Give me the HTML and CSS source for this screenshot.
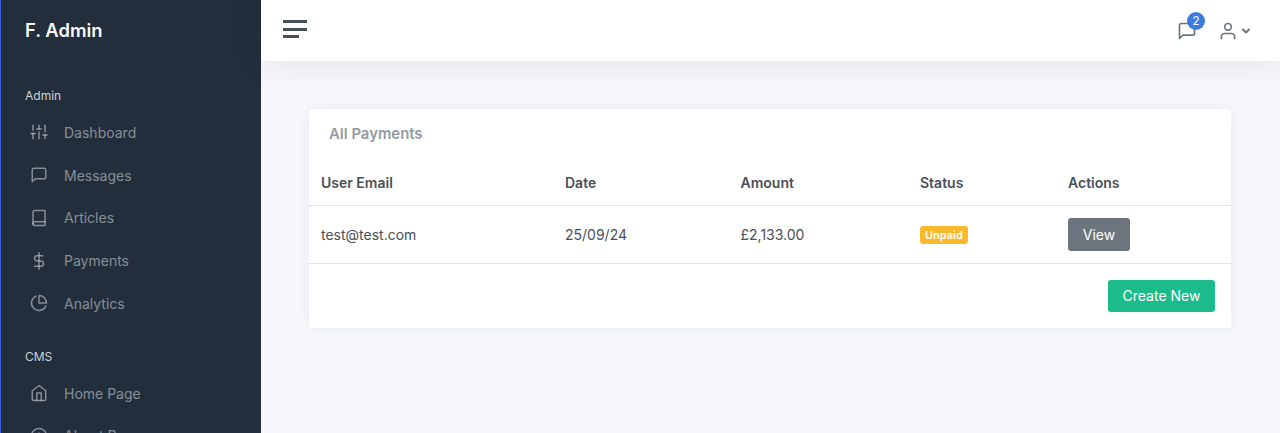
FILE: index.html
```html
<!DOCTYPE html>
<html lang="en">
<head>
    <meta charset="UTF-8">
    <meta name="viewport" content="width=device-width, initial-scale=1.0">
    <title>F. Admin - Payments</title>
    <link rel="stylesheet" href="styles.css">
</head>
<body>
    <div class="wrapper">
        <nav class="sidebar">
            <a class="brand" href="#">F. Admin</a>
            <div class="nav-header nav-header-first">Admin</div>
            <a class="nav-link" href="#">
                <svg class="nav-icon" viewBox="0 0 24 24"><line x1="4" y1="21" x2="4" y2="14"/><line x1="4" y1="10" x2="4" y2="3"/><line x1="12" y1="21" x2="12" y2="12"/><line x1="12" y1="8" x2="12" y2="3"/><line x1="20" y1="21" x2="20" y2="16"/><line x1="20" y1="12" x2="20" y2="3"/><line x1="1" y1="14" x2="7" y2="14"/><line x1="9" y1="8" x2="15" y2="8"/><line x1="17" y1="16" x2="23" y2="16"/></svg>
                Dashboard
            </a>
            <a class="nav-link" href="#">
                <svg class="nav-icon" viewBox="0 0 24 24"><path d="M21 15a2 2 0 0 1-2 2H7l-4 4V5a2 2 0 0 1 2-2h14a2 2 0 0 1 2 2z"/></svg>
                Messages
            </a>
            <a class="nav-link" href="#">
                <svg class="nav-icon" viewBox="0 0 24 24"><path d="M4 19.5A2.5 2.5 0 0 1 6.500 17H20"/><path d="M6.500 2H20v20H6.500A2.500 2.500 0 0 1 4 19.500v-15A2.500 2.500 0 0 1 6.500 2z"/></svg>
                Articles
            </a>
            <a class="nav-link" href="#">
                <svg class="nav-icon" viewBox="0 0 24 24"><line x1="12" y1="1" x2="12" y2="23"/><path d="M17 5H9.500a3.500 3.500 0 0 0 0 7h5a3.500 3.500 0 0 1 0 7H6"/></svg>
                Payments
            </a>
            <a class="nav-link" href="#">
                <svg class="nav-icon" viewBox="0 0 24 24"><path d="M21.210 15.890A10 10 0 1 1 8 2.830"/><path d="M22 12A10 10 0 0 0 12 2v10z"/></svg>
                Analytics
            </a>
            <div class="nav-header">CMS</div>
            <a class="nav-link" href="#">
                <svg class="nav-icon" viewBox="0 0 24 24"><path d="M3 9l9-7 9 7v11a2 2 0 0 1-2 2H5a2 2 0 0 1-2-2z"/><polyline points="9 22 9 12 15 12 15 22"/></svg>
                Home Page
            </a>
            <a class="nav-link" href="#">
                <svg class="nav-icon" viewBox="0 0 24 24"><circle cx="12" cy="12" r="10"/><line x1="12" y1="16" x2="12" y2="12"/><line x1="12" y1="8" x2="12.010" y2="8"/></svg>
                About Page
            </a>
        </nav>

        <div class="main">
            <header class="topbar">
                <a class="hamburger" href="#"><span></span><span></span><span class="short"></span></a>
                <div class="topbar-right">
                    <a class="top-icon" href="#">
                        <svg class="top-svg" viewBox="0 0 24 24"><path d="M21 15a2 2 0 0 1-2 2H7l-4 4V5a2 2 0 0 1 2-2h14a2 2 0 0 1 2 2z"/></svg>
                        <span class="count">2</span>
                    </a>
                    <a class="user-menu" href="#">
                        <svg class="top-svg" viewBox="0 0 24 24"><path d="M20 21v-2a4 4 0 0 0-4-4H8a4 4 0 0 0-4 4v2"/><circle cx="12" cy="7" r="4"/></svg>
                        <svg class="caret" viewBox="0 0 24 24"><polyline points="6 9 12 15 18 9"/></svg>
                    </a>
                </div>
            </header>

            <main class="content">
                <div class="card">
                    <h5 class="card-title">All Payments</h5>
                    <table class="table">
                        <thead>
                            <tr>
                                <th class="col-email">User Email</th>
                                <th class="col-date">Date</th>
                                <th class="col-amount">Amount</th>
                                <th class="col-status">Status</th>
                                <th>Actions</th>
                            </tr>
                        </thead>
                        <tbody>
                            <tr>
                                <td>test@test.com</td>
                                <td>25/09/24</td>
                                <td>£2,133.00</td>
                                <td><span class="badge">Unpaid</span></td>
                                <td><a class="btn btn-view" href="#">View</a></td>
                            </tr>
                        </tbody>
                    </table>
                    <div class="card-footer">
                        <a class="btn btn-create" href="#">Create New</a>
                    </div>
                </div>
            </main>
        </div>
    </div>
</body>
</html>
```

FILE: styles.css
```css
* {
    box-sizing: border-box;
}
html, body {
    height: 100%;
    margin: 0;
    overflow: hidden;
}
body {
    font-family: Inter, "Liberation Sans", sans-serif;
    font-size: 14px;
    color: #495057;
    background-color: #f5f7fb;
}
a {
    text-decoration: none;
}
.wrapper {
    display: flex;
    height: 100%;
}

/* sidebar */
.sidebar {
    flex: 0 0 261px;
    height: 100%;
    overflow: hidden;
    background: #222e3c;
    border-left: 1px solid #3b5fe0;
}
.brand {
    display: block;
    padding: 18px 24px 0;
    height: 61px;
    font-size: 18.4px;
    line-height: 25px;
    font-weight: 600;
    color: #f8f9fa;
}
.nav-header {
    padding: 23px 24px 6px;
    font-size: 12px;
    line-height: 18px;
    color: #ced4da;
}
.nav-header-first {
    padding-top: 26px;
}
.nav-link {
    display: flex;
    align-items: center;
    height: 42.75px;
    padding-left: 29px;
    color: rgba(233, 236, 239, 0.5);
    font-size: 14px;
}
.nav-icon {
    width: 18px;
    height: 18px;
    margin-right: 16px;
    fill: none;
    stroke: rgba(233, 236, 239, 0.5);
    stroke-width: 2;
    stroke-linecap: round;
    stroke-linejoin: round;
}

/* topbar */
.main {
    flex: 1;
    min-width: 0;
}
.topbar {
    display: flex;
    align-items: center;
    justify-content: space-between;
    height: 61px;
    padding: 0 28px 0 22px;
    background: #fff;
    box-shadow: 0 0 32px rgba(33, 37, 41, 0.1);
}
.hamburger {
    display: flex;
    flex-direction: column;
    gap: 4.5px;
    width: 24px;
    margin-top: -3px;
}
.hamburger span {
    display: block;
    height: 3px;
    background: #495057;
}
.hamburger .short {
    width: 16px;
}
.topbar-right {
    display: flex;
    align-items: center;
    gap: 21px;
}
.top-icon {
    position: relative;
    display: flex;
}
.top-svg {
    width: 20px;
    height: 20px;
    fill: none;
    stroke: #6c757d;
    stroke-width: 2;
    stroke-linecap: round;
    stroke-linejoin: round;
}
.count {
    position: absolute;
    top: -9px;
    right: -8px;
    width: 18px;
    height: 18px;
    border-radius: 50%;
    background: #3b7ddd;
    color: #fff;
    font-size: 11.5px;
    line-height: 18px;
    text-align: center;
}
.user-menu {
    display: flex;
    align-items: center;
    gap: 2px;
}
.caret {
    width: 12px;
    height: 12px;
    fill: none;
    stroke: #6c757d;
    stroke-width: 4;
    stroke-linecap: round;
    stroke-linejoin: round;
}

/* content */
.content {
    padding: 48px 48px 0;
}
.card {
    width: 922px;
    background: #fff;
    border-radius: 4px;
    box-shadow: 0 0 14px rgba(33, 37, 41, 0.05);
}
.card-title {
    margin: 0;
    padding: 16px 20px 0;
    height: 51px;
    font-size: 14.9px;
    line-height: 18px;
    font-weight: 600;
    color: #939ba2;
}
.table {
    width: 100%;
    border-collapse: collapse;
    table-layout: fixed;
}
.table th {
    height: 45px;
    padding: 0 12px;
    text-align: left;
    font-weight: 600;
    color: #495057;
    border-bottom: 1px solid #dee2e6;
}
.table td {
    height: 58px;
    padding: 0 12px;
    border-bottom: 1px solid #dee2e6;
}
.col-email {
    width: 244px;
}
.col-date {
    width: 175.5px;
}
.col-amount {
    width: 179.5px;
}
.col-status {
    width: 148px;
}
.badge {
    display: inline-block;
    padding: 0 5px;
    border-radius: 3px;
    background: #fcb92c;
    color: #fff;
    font-size: 11px;
    font-weight: 600;
    line-height: 18px;
    vertical-align: middle;
}
.btn {
    display: inline-block;
    border-radius: 3px;
    color: #fff;
    text-align: center;
}
.btn-view {
    width: 62px;
    height: 33px;
    line-height: 33px;
    background: #6c757d;
}
.btn-create {
    width: 107px;
    height: 32px;
    line-height: 32px;
    background: #1cbb8c;
}
.card-footer {
    display: flex;
    justify-content: flex-end;
    padding: 16px;
}
```
